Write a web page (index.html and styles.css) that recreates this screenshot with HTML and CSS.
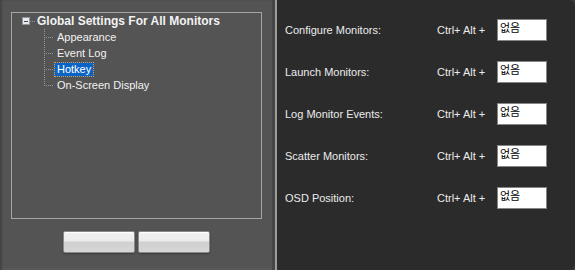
FILE: index.html
```html
<!DOCTYPE html>
<html lang="ko">
<head>
    <meta charset="UTF-8">
    <title>Monitor Settings - Hotkey</title>
    <link rel="stylesheet" href="styles.css">
</head>
<body>
    <div class="window">
        <div class="left-pane">
            <div class="tree">
                <div class="tree-root">
                    <span class="expander"></span>
                    <span class="root-stub"></span>
                    <span class="root-label">Global Settings For All Monitors</span>
                </div>
                <ul class="tree-children">
                    <li><span class="connector"></span><span class="node-label">Appearance</span></li>
                    <li><span class="connector"></span><span class="node-label">Event Log</span></li>
                    <li><span class="connector"></span><span class="node-label selected">Hotkey</span></li>
                    <li class="last"><span class="connector"></span><span class="node-label">On-Screen Display</span></li>
                </ul>
            </div>
            <div class="buttons">
                <button class="btn"></button>
                <button class="btn"></button>
            </div>
        </div>
        <div class="divider"></div>
        <div class="right-pane">
            <div class="hotkey-row">
                <span class="hotkey-label">Configure Monitors:</span>
                <span class="modifier">Ctrl+ Alt +</span>
                <span class="key-box">없음</span>
            </div>
            <div class="hotkey-row">
                <span class="hotkey-label">Launch Monitors:</span>
                <span class="modifier">Ctrl+ Alt +</span>
                <span class="key-box">없음</span>
            </div>
            <div class="hotkey-row">
                <span class="hotkey-label">Log Monitor Events:</span>
                <span class="modifier">Ctrl+ Alt +</span>
                <span class="key-box">없음</span>
            </div>
            <div class="hotkey-row">
                <span class="hotkey-label">Scatter Monitors:</span>
                <span class="modifier">Ctrl+ Alt +</span>
                <span class="key-box">없음</span>
            </div>
            <div class="hotkey-row">
                <span class="hotkey-label">OSD Position:</span>
                <span class="modifier">Ctrl+ Alt +</span>
                <span class="key-box">없음</span>
            </div>
        </div>
    </div>
</body>
</html>
```

FILE: styles.css
```css
body {
    margin: 0;
    padding: 0;
    font-family: "Liberation Sans", Arial, sans-serif;
    font-size: 11px;
    background-color: #3a3a3a;
}
.window {
    display: flex;
    width: 575px;
    height: 270px;
    overflow: hidden;
}
.left-pane {
    width: 272px;
    flex-shrink: 0;
    box-sizing: border-box;
    padding: 12px 0 0 11px;
    background-color: #545454;
    box-shadow: inset 2px 0 2px #444, inset 0 -2px 1px #5e5e5e;
}
.tree {
    width: 251px;
    height: 207px;
    box-sizing: border-box;
    border: 1px solid #a2a6ac;
    color: #f2f2f2;
}
.tree-root {
    display: flex;
    align-items: center;
    height: 16px;
    padding-left: 10px;
}
.expander {
    width: 6px;
    height: 6px;
    border: 1px solid #8f96a0;
    background: linear-gradient(#3a4a66, #3a4a66) center / 4px 1px no-repeat, #e8e8e8;
}
.root-stub {
    width: 6px;
    height: 1px;
    background: repeating-linear-gradient(to right, #9a9a9a 0 1px, transparent 1px 2px);
}
.root-label {
    margin-left: 1px;
    font-weight: bold;
    font-size: 12px;
}
.tree-children {
    list-style: none;
    margin: 0;
    padding: 0 0 0 32px;
}
.tree-children li {
    display: flex;
    align-items: center;
    height: 16px;
}
.connector {
    width: 10px;
    height: 16px;
    background:
        repeating-linear-gradient(to right, #9a9a9a 0 1px, transparent 1px 2px) 2px 8px / 8px 1px no-repeat,
        repeating-linear-gradient(to bottom, #9a9a9a 0 1px, transparent 1px 2px) 0 0 / 1px 100% no-repeat;
}
.last .connector {
    background:
        repeating-linear-gradient(to right, #9a9a9a 0 1px, transparent 1px 2px) 2px 8px / 8px 1px no-repeat,
        repeating-linear-gradient(to bottom, #9a9a9a 0 1px, transparent 1px 2px) 0 0 / 1px 9px no-repeat;
}
.node-label {
    padding: 0 2px;
    line-height: 13px;
    border: 1px solid transparent;
}
.selected {
    background-color: #0a64c8;
    border: 1px dotted #f09a28;
    color: #fff;
}
.buttons {
    display: flex;
    justify-content: center;
    gap: 3px;
    margin: 12px 0 0 -11px;
}
.btn {
    width: 72px;
    height: 22px;
    padding: 0;
    border: 1px solid #8a8a8a;
    border-radius: 2px;
    background: linear-gradient(#f2f2f2 0, #ebebeb 45%, #d0d0d0 50%, #d6d6d6 100%);
    box-shadow: inset 0 1px 0 #fff, 0 1px 2px #3a3a3a;
}
.divider {
    width: 2px;
    flex-shrink: 0;
    background-color: #9c9c9c;
    border-left: 3px solid #464646;
}
.right-pane {
    flex: 1;
    display: flex;
    flex-direction: column;
    gap: 20px;
    padding: 19px 0 0 8px;
    background-color: #2b2b2b;
    border-radius: 0 6px 6px 0;
    color: #ececec;
}
.hotkey-row {
    display: grid;
    grid-template-columns: 152px 60px 50px;
    align-items: center;
    height: 22px;
}
.key-box {
    height: 22px;
    box-sizing: border-box;
    padding: 1px 0 0 2px;
    border: 1px solid #858585;
    background-color: #fff;
    color: #000;
    font-family: "Noto Sans CJK KR", sans-serif;
    font-size: 11px;
    line-height: 13px;
}
```
